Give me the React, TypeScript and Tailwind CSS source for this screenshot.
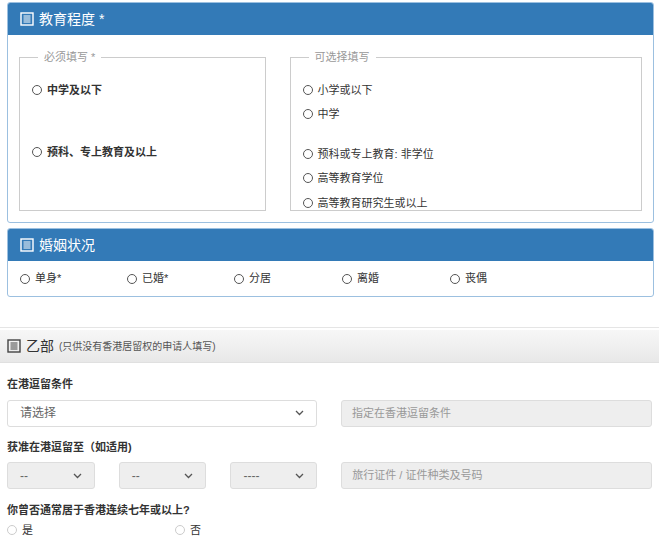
import React from "react";

const font = { fontFamily: '"Liberation Sans", "Noto Sans CJK SC", sans-serif' };

const ListIcon = ({ className = "" }: { className?: string }) => (
  <svg width="14" height="14" viewBox="0 0 14 14" className={className} fill="none" stroke="currentColor">
    <rect x="1" y="1" width="12" height="12" strokeWidth="1.4" />
    <path d="M3.5 4h7M3.5 6h7M3.5 8h7M3.5 10h7" strokeWidth="1" />
  </svg>
);

const Radio = ({ label, bold = false, light = false }: { label: string; bold?: boolean; light?: boolean }) => (
  <label className="flex items-center gap-[5px] text-[11px] text-[#333]">
    <span className={`w-[10px] h-[10px] rounded-full border ${light ? "border-[#ccc]" : "border-[#555]"} bg-white`} />
    <span className={bold ? "font-bold" : ""}>{label}</span>
  </label>
);

const Chevron = () => (
  <svg width="9" height="6" viewBox="0 0 9 6" className="text-[#555]">
    <path d="M1 1l3.5 3.5L8 1" stroke="currentColor" strokeWidth="1.3" fill="none" />
  </svg>
);

const Select = ({ text, className = "", gray = false }: { text: string; className?: string; gray?: boolean }) => (
  <div
    className={`h-[27px] flex items-center justify-between px-[12px] rounded-[3px] border border-[#ddd] text-[12px] text-[#666] ${gray ? "bg-[#eeeeee]" : "bg-white"} ${className}`}
  >
    <span>{text}</span>
    <Chevron />
  </div>
);

const Fieldset = ({ legend, children, className = "" }: { legend: string; children: React.ReactNode; className?: string }) => (
  <fieldset className={`border border-[#ccc] px-[12px] pb-0 ${className}`}>
    <legend className="px-[6px] ml-[6px] text-[11px] text-[#999]">{legend}</legend>
    {children}
  </fieldset>
);

export default function App() {
  return (
    <div className="w-[659px] h-[548px] bg-white overflow-hidden" style={font}>
      <div className="pt-[2px] pl-[7px] pr-[5px]">
        <div className="border border-[#9cc0e0] rounded-[3px] overflow-hidden">
          <div className="h-[32px] bg-[#337ab7] text-white flex items-center gap-[5px] px-[12px] text-[14px]">
            <ListIcon />
            <span>教育程度 *</span>
          </div>
          <div className="flex gap-[24px] px-[11px] pt-[14px] pb-[11px]">
            <Fieldset legend="必须填写 *" className="w-[247px] h-[162px]">
              <div className="pt-[16px]"><Radio label="中学及以下" bold /></div>
              <div className="pt-[46px]"><Radio label="预科、专上教育及以上" bold /></div>
            </Fieldset>
            <Fieldset legend="可选择填写" className="w-[353px] h-[162px]">
              <div className="pt-[16px] flex flex-col gap-[8px]">
                <Radio label="小学或以下" />
                <Radio label="中学" />
              </div>
              <div className="pt-[23px] flex flex-col gap-[8px]">
                <Radio label="预科或专上教育: 非学位" />
                <Radio label="高等教育学位" />
                <Radio label="高等教育研究生或以上" />
              </div>
            </Fieldset>
          </div>
        </div>

        <div className="mt-[5px] border border-[#9cc0e0] rounded-[3px] overflow-hidden">
          <div className="h-[32px] bg-[#337ab7] text-white flex items-center gap-[5px] px-[12px] text-[14px]">
            <ListIcon />
            <span>婚姻状况</span>
          </div>
          <div className="h-[35px] flex items-center px-[12px]">
            <div className="w-[107px]"><Radio label="单身*" /></div>
            <div className="w-[107px]"><Radio label="已婚*" /></div>
            <div className="w-[108px]"><Radio label="分居" /></div>
            <div className="w-[108px]"><Radio label="离婚" /></div>
            <div><Radio label="丧偶" /></div>
          </div>
        </div>
      </div>

      <div className="mt-[30px] border-t border-[#e5e5e5] pt-[2px]">
        <div className="h-[33px] bg-gradient-to-b from-[#f7f7f7] to-[#e8e8e8] flex items-center gap-[5px] px-[7px] text-[#333] border-b border-[#e0e0e0]">
          <ListIcon className="text-[#444]" />
          <span className="text-[14px]">乙部</span>
          <span className="text-[10px] text-[#555]">(只供没有香港居留权的申请人填写)</span>
        </div>
        <div className="px-[7px] pt-[13px]">
          <div className="text-[11px] font-bold text-[#333]">在港逗留条件</div>
          <div className="flex gap-[24px] mt-[7px]">
            <Select text="请选择" className="w-[311px]" />
            <div className="w-[312px] h-[27px] flex items-center px-[10px] rounded-[3px] border border-[#ddd] bg-[#eeeeee] text-[11px] text-[#999]">指定在香港逗留条件</div>
          </div>
          <div className="text-[11px] font-bold text-[#333] mt-[12px]">获准在港逗留至（如适用)</div>
          <div className="flex gap-[24px] mt-[7px]">
            <Select text="--" gray className="w-[88px]" />
            <Select text="--" gray className="w-[88px]" />
            <Select text="----" gray className="w-[87px]" />
            <div className="w-[312px] h-[27px] flex items-center px-[10px] rounded-[3px] border border-[#ddd] bg-[#eeeeee] text-[11px] text-[#999]">旅行证件 / 证件种类及号码</div>
          </div>
          <div className="text-[11px] font-bold text-[#333] mt-[13px]">你曾否通常居于香港连续七年或以上?</div>
          <div className="flex mt-[3px] text-[#555]">
            <div className="w-[168px]"><Radio label="是" light /></div>
            <Radio label="否" light />
          </div>
        </div>
        <div className="mt-[10px] border-t-[3px] border-[#eee]" />
      </div>
    </div>
  );
}
